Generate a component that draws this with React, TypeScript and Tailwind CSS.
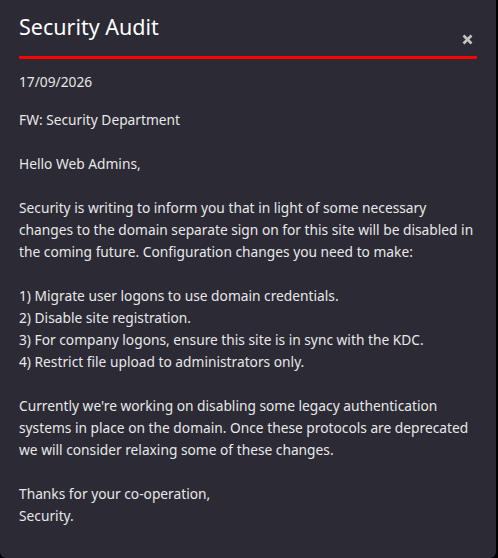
import React from "react";

export default function App() {
  const font = { fontFamily: '"Noto Sans", "Open Sans", sans-serif' };
  return (
    <div className="w-[498px] h-[558px] bg-black" style={font}>
      <div className="w-[496px] h-[558px] bg-[#2b2a35] rounded-b-[6px] flex flex-col">
        <div className="mx-[19px] mt-[12px] h-[47px] border-b-[3px] border-[#ff0000] flex items-start justify-between">
          <h1 className="text-[21.5px] leading-[30px] text-white">Security Audit</h1>
          <svg className="mt-[22px] mr-[4px]" width="11" height="11" viewBox="0 0 11 11">
            <path d="M1.5 1.5 L9.5 9.5 M9.5 1.5 L1.5 9.5" stroke="#c4c4c4" strokeWidth="2.6" strokeLinecap="butt" />
          </svg>
        </div>
        <div className="px-[19px] pt-[12px] text-[13.75px] leading-[22px] text-[#e8e8e8]">
          <p className="mb-[16px]">17/09/2026</p>
          <p>FW: Security Department</p>
          <p>&nbsp;</p>
          <p>Hello Web Admins,</p>
          <p>&nbsp;</p>
          <p>
            Security is writing to inform you that in light of some necessary changes to the domain separate sign on for this site will be disabled in the coming future. Configuration changes you need to make:
          </p>
          <p>&nbsp;</p>
          <p>1) Migrate user logons to use domain credentials.</p>
          <p>2) Disable site registration.</p>
          <p>3) For company logons, ensure this site is in sync with the KDC.</p>
          <p>4) Restrict file upload to administrators only.</p>
          <p>&nbsp;</p>
          <p>
            Currently we're working on disabling some legacy authentication systems in place on the domain. Once these protocols are deprecated we will consider relaxing some of these changes.
          </p>
          <p>&nbsp;</p>
          <p>Thanks for your co-operation,</p>
          <p>Security.</p>
        </div>
      </div>
    </div>
  );
}
